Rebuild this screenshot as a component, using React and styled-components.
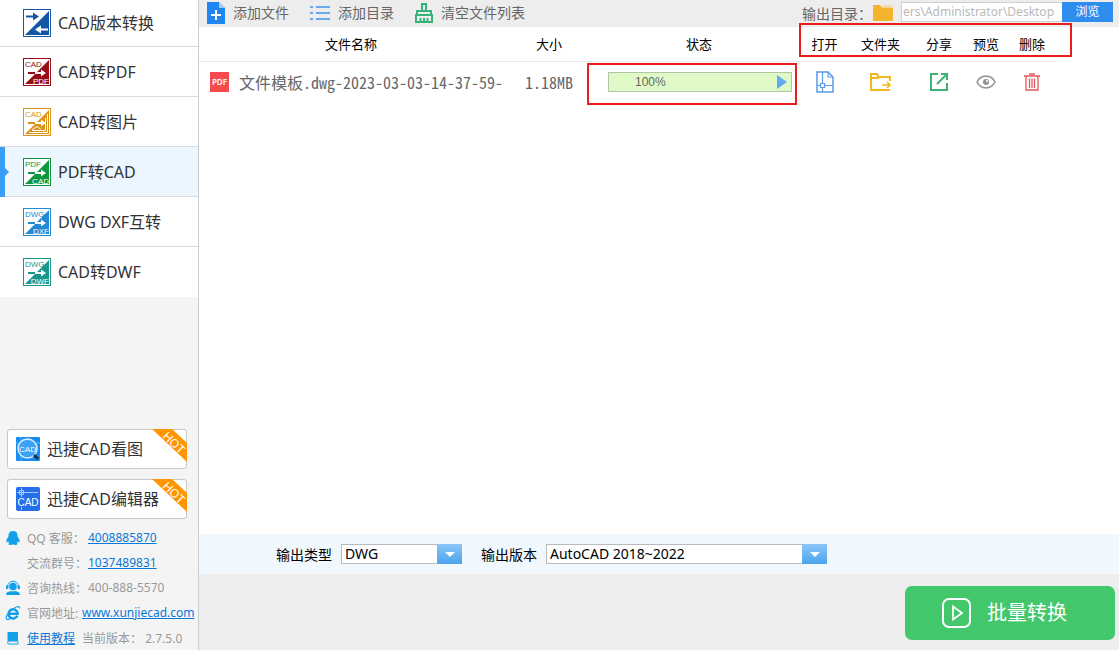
import React from "react";
import styled, { createGlobalStyle, css } from "styled-components";

const ui = `"Noto Sans", "Noto Sans CJK SC", sans-serif`;

const GlobalStyle = createGlobalStyle`
  * { box-sizing: border-box; }
  body { margin: 0; font-family: ${ui}; background: #fff; }
  button, input, select { font-family: inherit; margin: 0; }
  svg { display: block; flex: none; }
`;

const Window = styled.div`
  display: flex;
  min-height: 100vh;
`;

/* ---------- sidebar ---------- */
const Sidebar = styled.aside`
  flex: none;
  width: 199px;
  display: flex;
  flex-direction: column;
  background: #f4f4f4;
  border-right: 1px solid #c9cdd1;
`;

const Nav = styled.nav`
  display: flex;
  flex-direction: column;
`;

const NavItem = styled.button`
  position: relative;
  display: flex;
  align-items: center;
  gap: 7px;
  height: 50px;
  padding: 0 0 0 23px;
  border: 0;
  border-bottom: 1px solid #d8dadc;
  background: #fff;
  color: #333;
  font-size: 16px;
  line-height: 24px;
  text-align: left;
  &:first-child { height: 47px; }
  &:last-child { border-bottom-color: #fff; }
  ${(p) => p.$active && css`
    background: #ebf6fe;
    &::before {
      content: "";
      position: absolute;
      left: 0;
      top: 0;
      width: 5px;
      height: 50px;
      background: #3a9df5;
    }
    &::after {
      content: "";
      position: absolute;
      left: 5px;
      top: 21px;
      border: 4px solid transparent;
      border-left-color: #3a9df5;
      border-right-width: 0;
    }
  `}
`;

const Promos = styled.div`
  display: flex;
  flex-direction: column;
  gap: 10px;
  margin-top: auto;
  padding: 24px 11px 6px 7px;
`;

const Promo = styled.button`
  position: relative;
  display: flex;
  align-items: center;
  gap: 7px;
  height: 40px;
  padding: 0 0 0 8px;
  border: 1px solid #c8c8c8;
  border-radius: 3px;
  background: #fff;
  color: #333;
  font-size: 16px;
  line-height: 24px;
  white-space: nowrap;
`;

const RibbonBox = styled.span`
  position: absolute;
  right: -1px;
  top: -1px;
`;

const Contacts = styled.ul`
  list-style: none;
  margin: 0;
  padding: 0 0 0 5px;
  color: #999;
  font-size: 12px;
`;

const Contact = styled.li`
  display: flex;
  align-items: center;
  height: 25px;
  white-space: nowrap;
`;

const ContactIcon = styled.span`
  width: 22px;
  flex: none;
`;

const ContactLabel = styled.span`
  width: ${(p) => (p.$tight ? "55px" : "61px")};
  flex: none;
`;

const Link = styled.a`
  color: #0a78d6;
  text-decoration: underline;
`;

const Version = styled.span`
  margin-left: 7px;
`;

/* ---------- main ---------- */
const Main = styled.main`
  flex: 1;
  min-width: 0;
  display: flex;
  flex-direction: column;
  background: #fff;
`;

const Toolbar = styled.div`
  display: flex;
  align-items: center;
  height: 27px;
  padding: 0 6px 2px 8px;
  background: #ededed;
  color: #666;
  font-size: 14px;
`;

const ToolButton = styled.button`
  display: flex;
  align-items: center;
  gap: 8px;
  padding: 0;
  margin-right: 21px;
  border: 0;
  background: none;
  color: #666;
  font-size: 14px;
  line-height: 20px;
  white-space: nowrap;
`;

const OutputDir = styled.div`
  display: flex;
  align-items: center;
  margin-left: auto;
`;

const DirLabel = styled.label`
  width: 71px;
  white-space: nowrap;
`;

const DirInput = styled.input`
  width: 161px;
  height: 20px;
  margin: 0 0 2px 8px;
  padding: 0 1px;
  border: 1px solid #d0d0d0;
  border-right: 0;
  background: #fff;
  color: #b8b8b8;
  font-size: 12px;
`;

const Browse = styled.button`
  width: 51px;
  height: 20px;
  margin-bottom: 2px;
  padding: 0;
  border: 0;
  background: #2f8df0;
  color: #fff;
  font-size: 12px;
  line-height: 20px;
`;

const FileArea = styled.div`
  position: relative;
  flex: 1;
`;

const Files = styled.table`
  width: 856px;
  table-layout: fixed;
  border-collapse: collapse;
`;

const Th = styled.th`
  height: 34px;
  padding: 0;
  border-bottom: 1px solid #e6e9ec;
  color: #000;
  font-size: 13px;
  font-weight: 400;
  line-height: 20px;
  white-space: nowrap;
`;

const Td = styled.td`
  height: 41px;
  padding: 0;
  color: #666;
  text-align: center;
  white-space: nowrap;
`;

const FileName = styled.div`
  display: flex;
  align-items: center;
  gap: 10px;
  padding-left: 11px;
  font-size: 16px;
  line-height: 24px;
`;

const Mono = styled.span`
  font-family: "Noto Sans CJK SC", sans-serif;
  font-feature-settings: "hwid";
  font-size: 16px;
  line-height: 24px;
`;

const PdfBadge = styled.span`
  width: 20px;
  height: 20px;
  background: #f54b4f;
  color: #fff;
  font-size: 8px;
  font-weight: 600;
  line-height: 20px;
  text-align: center;
`;

const Progress = styled.div`
  display: flex;
  align-items: center;
  justify-content: space-between;
  width: 184px;
  height: 20px;
  margin-left: 13px;
  padding: 0 4px 0 26px;
  border: 1px solid #b4c4a4;
  background: #dffac6;
  font-family: "Liberation Sans", sans-serif;
  font-size: 12px;
`;

const IconButton = styled.button`
  display: inline-flex;
  padding: 0;
  border: 0;
  background: none;
  vertical-align: middle;
`;

const IconCell = styled(Td)`
  font-size: 0;
`;

const Callout = styled.div`
  position: absolute;
  left: ${(p) => p.$left}px;
  top: ${(p) => p.$top}px;
  width: ${(p) => p.$width}px;
  height: ${(p) => p.$height}px;
  border: 2px solid #ea1c1c;
  pointer-events: none;
`;

const Options = styled.div`
  display: flex;
  align-items: center;
  gap: 19px;
  height: 40px;
  padding-left: 77px;
  background: #f0f8fe;
`;

const Field = styled.label`
  display: flex;
  align-items: center;
  gap: 9px;
  color: #000;
  font-size: 14px;
  white-space: nowrap;
`;

const SelectBox = styled.span`
  position: relative;
  display: flex;
  width: ${(p) => p.$width}px;
  height: 20px;
`;

const Select = styled.select`
  appearance: none;
  width: 100%;
  height: 20px;
  padding: 0 28px 0 3px;
  border: 1px solid #b8bcc0;
  border-radius: 0;
  background: #fff;
  color: #000;
  font-size: 14px;
  line-height: 18px;
`;

const Arrow = styled.span`
  position: absolute;
  right: 0;
  top: 0;
  display: flex;
  align-items: center;
  justify-content: center;
  width: 25px;
  height: 20px;
  background: linear-gradient(#8cc6f7, #4ba4ee);
  pointer-events: none;
`;

const Footer = styled.footer`
  display: flex;
  justify-content: flex-end;
  height: 76px;
  padding: 12px 4px 10px 0;
  background: #ededed;
`;

const Convert = styled.button`
  display: flex;
  align-items: center;
  gap: 16px;
  width: 210px;
  height: 54px;
  padding: 0 0 0 37px;
  border: 0;
  border-radius: 7px;
  background: #42c76a;
  color: #fff;
  font-size: 20px;
  line-height: 28px;
  white-space: nowrap;
`;

/* ---------- drawings ---------- */
const SvgText = styled.text`
  font-family: "Liberation Sans", sans-serif;
  font-size: ${(p) => p.$size || 9}px;
`;

function ConvertIcon({ color, from, to, picture }) {
  return (
    <svg width="28" height="28" viewBox="0 0 28 28">
      <rect x=".5" y=".5" width="27" height="27" fill="#fff" stroke={color} />
      <path d="M26 2V26H2z" fill={color} />
      {!from && (
        <>
          <path d="M3 7.500h8" stroke={color} strokeWidth="2" />
          <path d="M10 3.500l6 4-6 4z" fill={color} />
          <path d="M25 20.500h-8" stroke="#fff" strokeWidth="2" />
          <path d="M18 16.500l-6 4 6 4z" fill="#fff" />
        </>
      )}
      {from && (
        <>
          <SvgText x="2" y="9" $size={8} fill={color}>{from}</SvgText>
          <path d="M5 15h8" stroke={color} strokeWidth="2" />
          <path d="M12 15h7" stroke="#fff" strokeWidth="2" />
          <path d="M18 11.500l5 3.500-5 3.500z" fill="#fff" />
          {picture ? (
            <path d="M24.500 6V24.500H6M22.500 10V22.500H9M9 22l5-3.500 4 3" fill="none" stroke="#fff" />
          ) : (
            <SvgText x="26" y="26" $size={8} textAnchor="end" fill="#fff">{to}</SvgText>
          )}
        </>
      )}
    </svg>
  );
}

function Ribbon() {
  return (
    <RibbonBox>
      <svg width="35" height="34" viewBox="0 0 35 34">
        <path d="M0 0H20L35 14V33z" fill="#ff9500" />
        <SvgText $size={12} fill="#fff" transform="translate(10 8) rotate(44)">HOT</SvgText>
      </svg>
    </RibbonBox>
  );
}

const ViewerIcon = () => (
  <svg width="24" height="24" viewBox="0 0 24 24">
    <rect width="24" height="24" rx="1" fill="#1a8cf0" />
    <path d="M5 0v24M0 6h24" stroke="#5fb4fa" />
    <circle cx="11.500" cy="11.500" r="9.500" fill="#3ba2f6" stroke="#d8eeff" strokeWidth="1.500" />
    <path d="M18 18l4 4" stroke="#16324f" strokeWidth="3" />
    <SvgText x="11.500" y="14.500" $size={8} textAnchor="middle" fill="#fff">CAD</SvgText>
  </svg>
);

const EditorIcon = () => (
  <svg width="24" height="24" viewBox="0 0 24 24">
    <rect width="24" height="24" rx="2" fill="#256fe8" />
    <path d="M5.500 1v22M1 5.500h21M3.500 3.500h4v4h-4z" fill="none" stroke="#a9cbfb" />
    <rect x="1" y="10" width="22" height="10" fill="#256fe8" />
    <SvgText x="12" y="19" $size={10} textAnchor="middle" fill="#fff">CAD</SvgText>
  </svg>
);

const QQIcon = () => (
  <svg width="16" height="16" viewBox="0 0 16 16" fill="#12a0ea">
    <path d="M8 1C5 1 3.500 3 3.500 5.500v1C2.500 7.800 1.200 9.800 1.200 12c.6.6 1.300 0 1.800-.8.2.8.7 1.500 1.200 2-.6.3-.9.8-.7 1.300 1 .7 3.400.6 4.500-.2 1.100.8 3.500.9 4.500.2.200-.5-.1-1-.7-1.300.5-.5 1-1.200 1.200-2 .5.800 1.200 1.400 1.800.8 0-2.200-1.300-4.200-2.300-5.500v-1C12.500 3 11 1 8 1z" />
  </svg>
);

const HotlineIcon = () => (
  <svg width="16" height="16" viewBox="0 0 16 16">
    <path d="M1 15c0-2.500 2-3.200 4-3.700h6c2 .5 4 1.200 4 3.700z" fill="#12a0ea" />
    <circle cx="8" cy="6.500" r="3.800" fill="#12a0ea" />
    <path d="M2.700 8V6.500a5.300 5.300 0 0 1 10.600 0V8" fill="none" stroke="#12a0ea" />
    <path d="M1 5.500h2.300v3.500H1zM12.700 5.500H15v3.500h-2.300z" fill="#12a0ea" />
  </svg>
);

const BrowserIcon = () => (
  <svg width="16" height="16" viewBox="0 0 16 16" fill="none" stroke="#12a0ea">
    <path d="M12.300 10.800A4.600 4.600 0 1 1 12.700 8.700H4" strokeWidth="2.500" />
    <path d="M9.500 3C12.500 1 15 1 14.500 3.500M3 8.500C.5 12 .8 15 3 14.500c1 0 2-.6 3-1.500" strokeWidth="1.200" />
  </svg>
);

const BookIcon = () => (
  <svg width="16" height="16" viewBox="0 0 16 16">
    <path d="M3.500 2H13v9.500H3.500c-.5 0-1 .3-1 1V3c0-.6.4-1 1-1z" fill="#12a0ea" />
    <path d="M13 11.500v2.500H3.500c-1.300 0-1.300-2 0-2" fill="none" stroke="#12a0ea" />
  </svg>
);

const AddFileIcon = () => (
  <svg width="18" height="22" viewBox="0 0 18 22">
    <path d="M0 0H12L18 6V22H0z" fill="#1f86f2" />
    <path d="M12 0v6h6z" fill="#a5d0fb" />
    <path d="M4 13h10M9 8v10" stroke="#fff" strokeWidth="2" />
  </svg>
);

const ListIcon = () => (
  <svg width="20" height="18" viewBox="0 0 20 18">
    <path d="M0 3h3M0 9h3M0 15h3M6 3h14M6 9h14M6 15h14" stroke="#6aa9f0" strokeWidth="2" />
  </svg>
);

const BroomIcon = () => (
  <svg width="18" height="20" viewBox="0 0 18 20" fill="none" stroke="#36b378" strokeWidth="2">
    <path d="M7 8V1h4v7M2 12V8h14v4M0 12h18M1 12v7h16v-7" />
    <path d="M5.500 15V19M9 15V19M12.500 15V19" />
  </svg>
);

const FolderIcon = () => (
  <svg width="20" height="17" viewBox="0 0 20 17">
    <path d="M0 1H7L9 3.500H20V17H0z" fill="#f3b32d" />
    <path d="M9.500 1H19V2.500H10.500z" fill="#f8d58b" />
  </svg>
);

const OpenIcon = () => (
  <svg width="18" height="22" viewBox="0 0 18 22" fill="none" stroke="#5a9be8" strokeWidth="1.500">
    <path d="M1 1H12L17 6V21H1z" />
    <path d="M12 1V6H17M6.500 1V12.500M1 14.500H4.500M8.500 14.500H17M6.500 16.500V21M4.500 12.500h4v4h-4z" strokeWidth="1.200" />
  </svg>
);

const OpenFolderIcon = () => (
  <svg width="22" height="20" viewBox="0 0 22 20" fill="none" stroke="#f2b71f" strokeWidth="2">
    <path d="M10 18H1V2H7L8.500 5H20V9M1 6H9M10 18H20" />
    <path d="M12 13H20M17 10L20 13L17 16" strokeWidth="1.600" />
  </svg>
);

const ShareIcon = () => (
  <svg width="20" height="20" viewBox="0 0 20 20" fill="none" stroke="#3cb371" strokeWidth="2">
    <path d="M9 2H2V18H18V11M12 2H18V8M18 2L8 12" />
  </svg>
);

const EyeIcon = () => (
  <svg width="20" height="14" viewBox="0 0 20 14">
    <path d="M1 7C5-.8 15-.8 19 7C15 14.800 5 14.800 1 7z" fill="none" stroke="#949494" strokeWidth="1.600" />
    <circle cx="10" cy="7" r="3" fill="#949494" />
    <circle cx="11" cy="6" r="1" fill="#fff" />
  </svg>
);

const TrashIcon = () => (
  <svg width="16" height="18" viewBox="0 0 16 18" fill="none" stroke="#e0595c" strokeWidth="1.300">
    <path d="M0 3H16M5 1H11M2 3V17H14V3M5.500 5.500V15M8 5.500V15M10.500 5.500V15" />
  </svg>
);

const PlayIcon = () => (
  <svg width="29" height="30" viewBox="0 0 29 30" fill="none" stroke="#fff" strokeWidth="2">
    <rect x="1" y="1" width="27" height="28" rx="6" />
    <path d="M11 8.500V21.500L20 15z" strokeWidth="1.800" />
  </svg>
);

const navItems = [
  { label: "CAD版本转换", color: "#1556a5" },
  { label: "CAD转PDF", color: "#960d18", from: "CAD", to: "PDF" },
  { label: "CAD转图片", color: "#dc9418", from: "CAD", picture: true },
  { label: "PDF转CAD", color: "#0c9740", from: "PDF", to: "CAD", active: true },
  { label: "DWG DXF互转", color: "#2289d2", from: "DWG", to: "DXF" },
  { label: "CAD转DWF", color: "#18978a", from: "DWG", to: "DWF" },
];

const columns = [
  { label: "文件名称", width: 304 },
  { label: "大小", width: 92 },
  { label: "状态", width: 208 },
  { label: "打开", width: 43, Icon: OpenIcon },
  { label: "文件夹", width: 69, Icon: OpenFolderIcon },
  { label: "分享", width: 48, Icon: ShareIcon },
  { label: "预览", width: 46, Icon: EyeIcon },
  { label: "删除", width: 46, Icon: TrashIcon },
];

function Dropdown({ label, width, value }) {
  return (
    <Field>
      {label}
      <SelectBox $width={width}>
        <Select defaultValue={value}>
          <option>{value}</option>
        </Select>
        <Arrow>
          <svg width="10" height="5" viewBox="0 0 10 5"><path d="M0 0H10L5 5z" fill="#fff" /></svg>
        </Arrow>
      </SelectBox>
    </Field>
  );
}

export default function App() {
  return (
    <Window>
      <GlobalStyle />
      <Sidebar>
        <Nav>
          {navItems.map(({ label, active, ...icon }) => (
            <NavItem key={label} type="button" $active={active}>
              <ConvertIcon {...icon} />
              {label}
            </NavItem>
          ))}
        </Nav>
        <Promos>
          <Promo type="button"><ViewerIcon />迅捷CAD看图<Ribbon /></Promo>
          <Promo type="button"><EditorIcon />迅捷CAD编辑器<Ribbon /></Promo>
        </Promos>
        <Contacts>
          <Contact>
            <ContactIcon><QQIcon /></ContactIcon>
            <ContactLabel>QQ 客服：</ContactLabel>
            <Link href="#qq">4008885870</Link>
          </Contact>
          <Contact>
            <ContactIcon />
            <ContactLabel>交流群号：</ContactLabel>
            <Link href="#group">1037489831</Link>
          </Contact>
          <Contact>
            <ContactIcon><HotlineIcon /></ContactIcon>
            <ContactLabel>咨询热线：</ContactLabel>
            <span>400-888-5570</span>
          </Contact>
          <Contact>
            <ContactIcon><BrowserIcon /></ContactIcon>
            <ContactLabel $tight>官网地址:</ContactLabel>
            <Link href="#site">www.xunjiecad.com</Link>
          </Contact>
          <Contact>
            <ContactIcon><BookIcon /></ContactIcon>
            <Link href="#guide">使用教程</Link>
            <Version>当前版本： 2.7.5.0</Version>
          </Contact>
        </Contacts>
      </Sidebar>

      <Main>
        <Toolbar>
          <ToolButton type="button"><AddFileIcon />添加文件</ToolButton>
          <ToolButton type="button"><ListIcon />添加目录</ToolButton>
          <ToolButton type="button"><BroomIcon />清空文件列表</ToolButton>
          <OutputDir>
            <DirLabel htmlFor="dir">输出目录：</DirLabel>
            <FolderIcon />
            <DirInput id="dir" defaultValue="ers\Administrator\Desktop" />
            <Browse type="button">浏览</Browse>
          </OutputDir>
        </Toolbar>

        <FileArea>
          <Files>
            <colgroup>
              {columns.map((c) => <col key={c.label} style={{ width: c.width }} />)}
            </colgroup>
            <thead>
              <tr>{columns.map((c) => <Th key={c.label}>{c.label}</Th>)}</tr>
            </thead>
            <tbody>
              <tr>
                <Td>
                  <FileName>
                    <PdfBadge>PDF</PdfBadge>
                    <Mono>文件模板.dwg-2023-03-03-14-37-59-</Mono>
                  </FileName>
                </Td>
                <Td><Mono>1.18MB</Mono></Td>
                <Td>
                  <Progress>
                    100%
                    <svg width="10" height="14" viewBox="0 0 10 14"><path d="M0 0L10 7L0 14z" fill="#64a8ee" /></svg>
                  </Progress>
                </Td>
                {columns.filter((c) => c.Icon).map(({ label, Icon }) => (
                  <IconCell key={label}>
                    <IconButton type="button" aria-label={label}><Icon /></IconButton>
                  </IconCell>
                ))}
              </tr>
            </tbody>
          </Files>
          <Callout $left={600} $top={-4} $width={273} $height={34} />
          <Callout $left={388} $top={36} $width={210} $height={42} />
        </FileArea>

        <Options>
          <Dropdown label="输出类型" width={121} value="DWG" />
          <Dropdown label="输出版本" width={281} value="AutoCAD 2018~2022" />
        </Options>
        <Footer>
          <Convert type="button"><PlayIcon />批量转换</Convert>
        </Footer>
      </Main>
    </Window>
  );
}
